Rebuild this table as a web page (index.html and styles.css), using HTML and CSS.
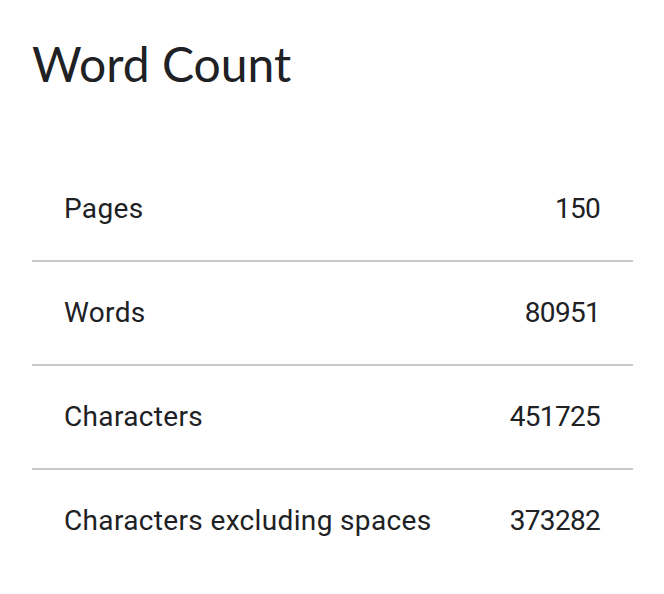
FILE: index.html
```html
<!DOCTYPE html>
<html>
<head>
<meta charset="utf-8">
<link rel="stylesheet" href="styles.css">
</head>
<body>
<div class="dialog">
  <h1 class="title">Word Count</h1>
  <div class="table">
    <div class="row"><span class="label">Pages</span><span class="value">150</span></div>
    <div class="row"><span class="label">Words</span><span class="value">80951</span></div>
    <div class="row"><span class="label">Characters</span><span class="value">451725</span></div>
    <div class="row last"><span class="label">Characters excluding spaces</span><span class="value">373282</span></div>
  </div>
</div>
</body>
</html>
```
FILE: styles.css
```css
html, body {
  margin: 0;
  padding: 0;
  background: #ffffff;
}
.dialog {
  width: 664px;
  height: 594px;
  box-sizing: border-box;
  padding: 30px 31px 0 32px;
  color: #202124;
}
.title {
  margin: 0;
  font-family: "Lato", "Open Sans", sans-serif;
  font-weight: 400;
  font-size: 48px;
  line-height: 68px;
}
.table {
  margin-top: 60px;
}
.row {
  display: flex;
  justify-content: space-between;
  align-items: center;
  height: 100px;
  padding: 0 32px 2px;
  border-bottom: 2px solid #c8c8c8;
  font-family: "Roboto", "Liberation Sans", sans-serif;
  font-size: 28px;
}
.label {
  letter-spacing: 0.35px;
}
.value {
  letter-spacing: -0.7px;
  margin-right: 1px;
}
.row.last {
  border-bottom: none;
}
```
